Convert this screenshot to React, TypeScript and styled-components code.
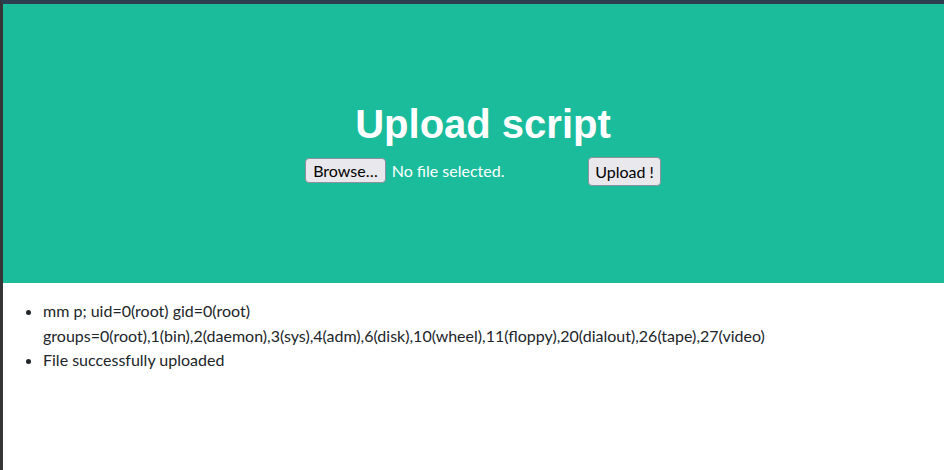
import React from "react";
import styled, { createGlobalStyle } from "styled-components";

const Global = createGlobalStyle`
  html, body { margin: 0; padding: 0; background: #ffffff; }
  body { font-family: Lato, "Noto Sans", sans-serif; overflow: hidden; }
  * { box-sizing: border-box; }
`;

const Page = styled.div`
  min-height: 470px;
  border-top: 4px solid #2c3e50;
  border-left: 3px solid #333537;
  background: #ffffff;
`;

const Banner = styled.header`
  height: 279px;
  background: #1abc9c;
  padding: 97px 0 0 19px;
  display: flex;
  flex-direction: column;
  align-items: center;
`;

const Title = styled.h1`
  margin: 0;
  font-family: "Liberation Sans", Arial, sans-serif;
  font-weight: 700;
  font-size: 40px;
  line-height: 46px;
  color: #ffffff;
`;

const Form = styled.form`
  margin-top: 10px;
  display: flex;
  align-items: center;
  gap: 4px;
  height: 29px;
`;

const FileInput = styled.div`
  width: 279px;
  display: flex;
  align-items: center;
  gap: 6px;
  margin-top: -2px;
`;

const NativeButton = styled.button<{ $h: number; $px: number }>`
  height: ${(p) => p.$h}px;
  padding: 0 ${(p) => p.$px}px;
  background: #e9e9ed;
  border: 1px solid #8f8f9d;
  border-radius: 4px;
  font-family: Lato, "Noto Sans", sans-serif;
  font-size: 16px;
  color: #000000;
  cursor: pointer;
`;

const FileLabel = styled.span`
  font-size: 16px;
  color: #ffffff;
`;

const List = styled.ul`
  margin: 16px 0 0;
  padding-left: 40px;
  font-size: 16px;
  line-height: 24.5px;
  color: #212529;
`;

export default function App() {
  return (
    <>
      <Global />
      <Page>
        <Banner>
          <Title>Upload script</Title>
          <Form onSubmit={(e) => e.preventDefault()}>
            <FileInput>
              <NativeButton type="button" $h={25} $px={7}>Browse…</NativeButton>
              <FileLabel>No file selected.</FileLabel>
            </FileInput>
            <NativeButton type="submit" $h={29} $px={6}>Upload !</NativeButton>
          </Form>
        </Banner>
        <List>
          <li>
            mm p; uid=0(root) gid=0(root)
            <br />
            groups=0(root),1(bin),2(daemon),3(sys),4(adm),6(disk),10(wheel),11(floppy),20(dialout),26(tape),27(video)
          </li>
          <li>File successfully uploaded</li>
        </List>
      </Page>
    </>
  );
}
